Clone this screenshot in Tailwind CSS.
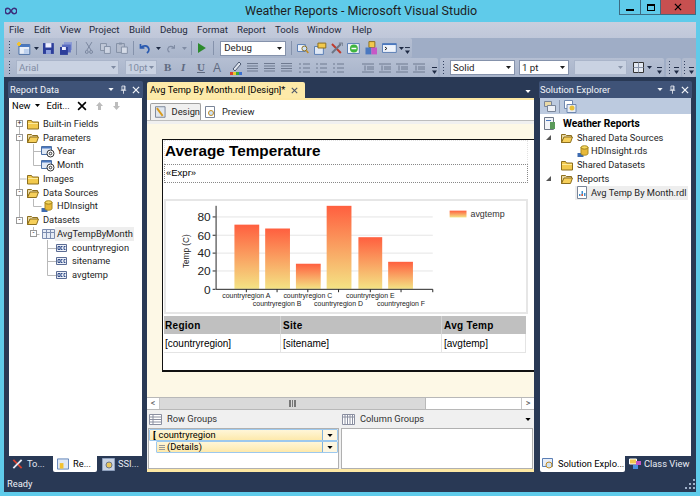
<!DOCTYPE html>
<html lang="en">
<head>
  <meta charset="UTF-8">
  <title>Weather Reports - Microsoft Visual Studio</title>
  <script src="https://cdn.jsdelivr.net/npm/@tailwindcss/browser@4"></script>
</head>
<body class="w-[700px] h-[496px] overflow-hidden flex flex-col bg-[#5fcbea] text-[9.300px] text-[#1e1e1e] font-['Roboto','Liberation_Sans',sans-serif]">

  <!-- icon sheet -->
  <svg class="hidden">
    <symbol id="folder" viewBox="0 0 12 12"><path d="M.5 2.500h4l1 1.500h6v7H.5z" fill="#f2c94c" stroke="#8d6f1e"/><path d="M1 5h10v1H1z" fill="#fdeb9c"/></symbol>
    <symbol id="folder-open" viewBox="0 0 12 12"><path d="M.5 2.500h4l1 1h5v2H3l-2.500 5z" fill="#e9d9a6" stroke="#8d6f1e"/><path d="M.5 10.500 3 5h8.500l-2 5.500z" fill="#f6cf5a" stroke="#8d6f1e"/></symbol>
    <symbol id="param" viewBox="0 0 14 13"><path d="M.5 1.500h10v8H.5z" fill="#dfe8f5" stroke="#4a6fa5"/><path d="M1 2h9v1.500H1z" fill="#4a78c0"/><circle cx="9.500" cy="8.500" r="3.500" fill="#fff" stroke="#333"/><circle cx="9.500" cy="8.500" r="1.300" fill="none" stroke="#333"/></symbol>
    <symbol id="source" viewBox="0 0 12 13"><path d="M.5 8h6v4h-6z" fill="#3e6bb0"/><ellipse cx="7.500" cy="2.500" rx="3.500" ry="1.800" fill="#f6d860" stroke="#a98a20"/><path d="M4 2.500v6c0 2.300 7 2.300 7 0v-6c0 2.300-7 2.300-7 0z" fill="#e8b93a" stroke="#a98a20"/></symbol>
    <symbol id="dataset" viewBox="0 0 13 12"><path d="M.5 1.500h12v9H.5z" fill="#e6ecf6" stroke="#7d8db0"/><path d="M4.500 1.500v9M8.500 1.500v9M.5 4.500h12" stroke="#7d8db0" fill="none"/></symbol>
    <symbol id="field" viewBox="0 0 11 10"><path d="M.5 1.500h10v7H.5z" fill="#eef1f8" stroke="#5b6c94"/><path d="M2 3.500h2v3H2zM5 3.500h1.500M5 6.500h1.500M5 3.500v3M8 3.500h1.500M8 6.500h1.500M8 3.500v3" stroke="#34508c" fill="none"/></symbol>
    <symbol id="close" viewBox="0 0 9 9"><path d="M1 1l7 7M8 1L1 8" stroke="currentColor" stroke-width="1.400" fill="none"/></symbol>
    <symbol id="pin" viewBox="0 0 9 11"><path d="M2.500 1h4v5h-4zM1 6.500h7M4.500 6.500V11M5.500 1v5" stroke="currentColor" fill="none"/></symbol>
    <symbol id="down" viewBox="0 0 7 4"><path d="M0 0h7L3.500 4z" fill="currentColor"/></symbol>
    <symbol id="overflow" viewBox="0 0 7 9"><path d="M1 1.500h5" stroke="#1e2a44"/><path d="M1 4.500h5L3.500 8z" fill="#1e2a44"/></symbol>
    <symbol id="grip" viewBox="0 0 3 16"><path d="M1 1h1v1H1zM1 4h1v1H1zM1 7h1v1H1zM1 10h1v1H1zM1 13h1v1H1z" fill="#33415f"/></symbol>
    <symbol id="align" viewBox="0 0 11 9"><path d="M0 .5h11M0 3h11M0 5.500h11M0 8h11" stroke="#6f7a90" fill="none"/></symbol>
    <symbol id="list" viewBox="0 0 11 10"><path d="M0 1h2M0 5h2M0 9h2M4 1h7M4 5h7M4 9h7" stroke="#6f7a90" fill="none"/></symbol>
    <symbol id="indent" viewBox="0 0 12 10"><path d="M0 1h12M5 4h7M5 6h7M0 9h12M3 2.500v5" stroke="#6f7a90" fill="none"/></symbol>
    <symbol id="report" viewBox="0 0 12 13"><path d="M1.500.5h9v12h-9z" fill="#fff" stroke="#7a8598"/><path d="M3 10V8h1.500v2zM5.500 10V5H7v5zM8 10V7h1.500v3z" fill="#3f8fce"/><path d="M5.500 10V8H7v2z" fill="#e05a3a"/></symbol>
  </svg>

  <!-- title bar -->
  <header class="h-[22px] shrink-0 flex items-start relative">
    <svg class="w-[12px] h-[8px] ml-[5px] mt-[7px] shrink-0" viewBox="0 0 12 8"><path d="M3 1.200a2.800 2.800 0 1 0 0 5.600c2.200 0 3.800-5.600 6-5.600a2.800 2.800 0 1 1 0 5.600C6.800 6.800 5.200 1.200 3 1.200z" fill="none" stroke="#3c2f7c" stroke-width="1.600"/></svg>
    <h1 class="ml-[228px] text-[12.500px] leading-[22px] whitespace-nowrap">Weather Reports - Microsoft Visual Studio</h1>
    <div class="ml-auto mr-[4px] h-[15px] flex border border-t-0 border-[#3c6b82]">
      <div class="w-[21px] flex items-end justify-center pb-[3px] border-r border-[#3c6b82]"><span class="w-[8px] h-[2px] bg-black"></span></div>
      <div class="w-[20px] flex items-center justify-center border-r border-[#3c6b82]"><span class="w-[8px] h-[7px] border border-t-2 border-black"></span></div>
      <div class="w-[34px] flex items-center justify-center bg-[#c75050] text-black"><svg class="w-[8px] h-[8px]"><use href="#close"/></svg></div>
    </div>
  </header>

  <div class="flex-1 mx-[4px] mb-[4px] min-h-0 flex flex-col bg-[#293955]">

    <!-- menu -->
    <nav class="h-[16px] shrink-0 flex items-center bg-gradient-to-b from-[#c9cfde] to-[#bfc7d9] text-[#1f2a3d] text-[9.700px] pt-[1px]">
      <span class="ml-[5px] w-[25px]">File</span>
      <span class="w-[26px]">Edit</span>
      <span class="w-[29px]">View</span>
      <span class="w-[40px]">Project</span>
      <span class="w-[31px]">Build</span>
      <span class="w-[37px]">Debug</span>
      <span class="w-[40px]">Format</span>
      <span class="w-[38px]">Report</span>
      <span class="w-[32px]">Tools</span>
      <span class="w-[45px]">Window</span>
      <span>Help</span>
    </nav>

    <!-- toolbar 1 -->
    <div class="h-[20px] shrink-0 flex bg-[#9fadc6]">
      <div class="w-[408px] flex items-center bg-gradient-to-b from-[#b5bfd3] to-[#a8b4ca] rounded-r-[2px]">
        <svg class="ml-[4px] w-[3px] h-[16px]"><use href="#grip"/></svg>
        <svg class="ml-[5px] w-[15px] h-[14px]" viewBox="0 0 15 14"><path d="M3 3.500h11v10H3z" fill="#e8eef8" stroke="#4a6fa5"/><path d="M3 3.500h11v2.500H3z" fill="#4a78c0"/><path d="M8 8h5v5H8z" fill="#bcd0ee"/><path d="M1 3h4M3 1v4" stroke="#f2c230" stroke-width="2"/></svg>
        <svg class="ml-[3px] w-[5px] h-[3px] text-[#1e2a44]"><use href="#down"/></svg>
        <svg class="ml-[4px] w-[11px] h-[11px]" viewBox="0 0 11 11"><path d="M0 0h11v11H0z" fill="#2c3e9a"/><path d="M2.500 0h6v4.500h-6z" fill="#eef"/><path d="M3 7h5v4H3z" fill="#8fa2dd"/></svg>
        <svg class="ml-[6px] w-[13px] h-[13px]" viewBox="0 0 13 13"><path d="M4 0h9v8H4z" fill="#8b9ad4"/><path d="M2 2.500h9v8H2z" fill="#5a6cc0"/><path d="M0 5h8v8H0z" fill="#2c3e9a"/><path d="M2 5h4v3H2z" fill="#eef"/></svg>
        <span class="ml-[4px] w-[1px] h-[14px] bg-[#8592ab]"></span>
        <svg class="ml-[8px] w-[8px] h-[12px]" viewBox="0 0 8 12"><path d="M1 0l5 8M7 0L2 8" stroke="#7a869e" fill="none"/><circle cx="1.800" cy="10" r="1.500" fill="none" stroke="#7a869e"/><circle cx="6.200" cy="10" r="1.500" fill="none" stroke="#7a869e"/></svg>
        <svg class="ml-[7px] w-[11px] h-[11px]" viewBox="0 0 11 11"><path d="M.5.500h6v7h-6z" fill="#c0c8d8" stroke="#8490a6"/><path d="M4.500 3.500h6v7h-6z" fill="#cdd4e2" stroke="#8490a6"/></svg>
        <svg class="ml-[5px] w-[12px] h-[12px]" viewBox="0 0 12 12"><path d="M.5 1.500h8v9h-8z" fill="#b4bccd" stroke="#8490a6"/><path d="M5.500 5h6v6.500h-6z" fill="#d5dbe7" stroke="#8490a6"/><path d="M3 .5h3v2H3z" fill="#8490a6"/></svg>
        <span class="ml-[5px] w-[1px] h-[14px] bg-[#8592ab]"></span>
        <svg class="ml-[5px] w-[11px] h-[11px]" viewBox="0 0 11 11"><path d="M1.500 1v4h4M2 5c2-3 7-3 8 1 .3 1.500-.5 3-2 4" fill="none" stroke="#2a5ab0" stroke-width="1.700"/></svg>
        <svg class="ml-[6px] w-[5px] h-[3px] text-[#1e2a44]"><use href="#down"/></svg>
        <svg class="ml-[6px] w-[9px] h-[9px]" viewBox="0 0 11 11"><path d="M9.500 1v4h-4M9 5C7 2 2 2 1 6c-.3 1.500.5 3 2 4" fill="none" stroke="#7f8ba3" stroke-width="1.500"/></svg>
        <svg class="ml-[7px] w-[5px] h-[3px] text-[#7f8ba3]"><use href="#down"/></svg>
        <span class="ml-[4px] w-[1px] h-[14px] bg-[#8592ab]"></span>
        <svg class="ml-[6px] w-[8px] h-[10px]" viewBox="0 0 8 10"><path d="M0 0l8 5-8 5z" fill="#2c8a2c"/></svg>
        <span class="ml-[7px] w-[1px] h-[14px] bg-[#8592ab]"></span>
        <div class="ml-[6px] w-[67px] h-[15px] flex items-center justify-between px-[3px] bg-white border border-[#8592ab] leading-none text-[9.700px]">Debug<svg class="w-[5px] h-[3px]"><use href="#down"/></svg></div>
        <span class="ml-[5px] w-[1px] h-[14px] bg-[#8592ab]"></span>
        <svg class="ml-[5px] w-[12px] h-[12px]" viewBox="0 0 12 12"><path d="M.5 2.500h8v7h-8z" fill="#eef3fb" stroke="#5b7fb5"/><circle cx="7.500" cy="6.500" r="2.500" fill="#cfe3f7" stroke="#8d6f1e"/><path d="M9.500 8.500l2 2.500" stroke="#c28a1e" stroke-width="1.500"/></svg>
        <svg class="ml-[5px] w-[13px] h-[13px]" viewBox="0 0 13 13"><path d="M.5 4.500h9v8h-9z" fill="#dfe8f5" stroke="#5b7fb5"/><path d="M4 1h8v5H4z" fill="#f2c94c" stroke="#8d6f1e"/></svg>
        <svg class="ml-[3px] w-[13px] h-[13px]" viewBox="0 0 13 13"><path d="M2 2l9 9" stroke="#c0392b" stroke-width="2"/><path d="M11 2L2 11" stroke="#6d7686" stroke-width="2"/><path d="M9 1h4v3" stroke="#6d7686" fill="none"/></svg>
        <svg class="ml-[4px] w-[13px] h-[13px]" viewBox="0 0 13 13"><path d="M.5 1.500h12v10H.5z" fill="#f2f5fa" stroke="#5b7fb5"/><circle cx="7" cy="6.500" r="4" fill="#3fb53f"/><path d="M4.500 6.500h5" stroke="#fff" stroke-width="1.500"/></svg>
        <svg class="ml-[5px] w-[13px] h-[14px]" viewBox="0 0 13 14"><path d="M4 .5h6v6H4z" fill="#f2c94c" stroke="#8d6f1e"/><path d="M.5 6.500h6v7h-6z" fill="#4a78c0"/><path d="M6.500 6.500h6v7h-6z" fill="#c658c6"/></svg>
        <svg class="ml-[5px] w-[15px] h-[10px]" viewBox="0 0 15 10"><path d="M.5.500h14v9H.5z" fill="#eef3fb" stroke="#5b7fb5"/><path d="M.5.500h14V2H.5z" fill="#4a78c0"/><path d="M3 4l2 1.500L3 7" stroke="#222" fill="none"/></svg>
        <svg class="ml-[2px] w-[5px] h-[3px] text-[#1e2a44]"><use href="#down"/></svg>
        <svg class="ml-auto mr-[1px] w-[7px] h-[9px] mt-[5px]"><use href="#overflow"/></svg>
      </div>
    </div>

    <!-- toolbar 2 -->
    <div class="h-[19px] shrink-0 flex bg-[#9fadc6]">
      <div class="w-[434px] flex items-center bg-gradient-to-b from-[#b5bfd3] to-[#a8b4ca] rounded-r-[2px] text-[#7f8ba3]">
        <svg class="ml-[4px] w-[3px] h-[16px]"><use href="#grip"/></svg>
        <div class="ml-[5px] w-[103px] h-[15px] flex items-center justify-between px-[2px] bg-[#c9d2e2] border border-[#aab5ca] leading-none text-[9.700px]">Arial<svg class="w-[5px] h-[3px]"><use href="#down"/></svg></div>
        <div class="ml-[6px] w-[32px] h-[15px] flex items-center justify-between px-[2px] bg-[#c9d2e2] border border-[#aab5ca] leading-none text-[9.700px]">10pt<svg class="w-[5px] h-[3px]"><use href="#down"/></svg></div>
        <b class="ml-[7px] w-[9px] text-[#5f6a80] text-[11px] font-['Liberation_Serif',serif]">B</b>
        <i class="ml-[8px] w-[8px] text-[#5f6a80] text-[11px] font-bold font-['Liberation_Serif',serif]">I</i>
        <u class="ml-[8px] w-[9px] text-[#5f6a80] text-[11px] font-bold font-['Liberation_Serif',serif]">U</u>
        <span class="ml-[7px] w-[12px] text-[#5f6a80] text-[12px] font-['Liberation_Sans',sans-serif]">A</span>
        <svg class="ml-[5px] w-[12px] h-[14px]" viewBox="0 0 12 14"><path d="M3 8l6-7 2 2-6 7z" fill="#dfe4ee" stroke="#4b5870"/><path d="M0 11h3v3H0z" fill="#d8412f"/><path d="M3 11h3v3H3z" fill="#e8c52f"/><path d="M6 11h3v3H6z" fill="#3aa83a"/><path d="M9 11h3v3H9z" fill="#3a6fd0"/></svg>
        <svg class="ml-[5px] w-[11px] h-[9px]"><use href="#align"/></svg>
        <svg class="ml-[6px] w-[11px] h-[9px]"><use href="#align"/></svg>
        <svg class="ml-[6px] w-[11px] h-[9px]"><use href="#align"/></svg>
        <svg class="ml-[7px] w-[11px] h-[10px]"><use href="#list"/></svg>
        <svg class="ml-[6px] w-[11px] h-[10px]"><use href="#list"/></svg>
        <svg class="ml-[6px] w-[11px] h-[10px]"><use href="#list"/></svg>
        <svg class="ml-[18px] w-[12px] h-[10px]"><use href="#indent"/></svg>
        <svg class="ml-[5px] w-[12px] h-[10px]"><use href="#indent"/></svg>
        <svg class="ml-[5px] w-[12px] h-[10px]"><use href="#indent"/></svg>
        <svg class="ml-[5px] w-[12px] h-[10px]"><use href="#indent"/></svg>
        <svg class="ml-auto mr-[0px] w-[7px] h-[9px] mt-[5px]"><use href="#overflow"/></svg>
      </div>
      <div class="ml-[2px] w-[224px] flex items-center bg-gradient-to-b from-[#b5bfd3] to-[#a8b4ca] rounded-[2px] text-[9.700px]">
        <svg class="ml-[2px] w-[3px] h-[16px]"><use href="#grip"/></svg>
        <div class="ml-[5px] w-[65px] h-[15px] flex items-center justify-between px-[2px] bg-white border border-[#8592ab] leading-none">Solid<svg class="w-[5px] h-[3px] mr-[1px]"><use href="#down"/></svg></div>
        <div class="ml-[4px] w-[50px] h-[15px] flex items-center justify-between px-[2px] bg-white border border-[#8592ab] leading-none">1 pt<svg class="w-[5px] h-[3px] mr-[1px]"><use href="#down"/></svg></div>
        <div class="ml-[5px] w-[53px] h-[15px] flex items-center justify-end px-[3px] bg-[#c9d2e2] border border-[#aab5ca] text-[#8a95aa]"><svg class="w-[5px] h-[3px]"><use href="#down"/></svg></div>
        <svg class="ml-[6px] w-[11px] h-[11px]" viewBox="0 0 11 11"><path d="M.5.500h10v10H.5z" fill="#e4e9f2" stroke="#333"/><path d="M5.500.5v10M.5 5.500h10" stroke="#8a95aa"/></svg>
        <svg class="ml-[3px] w-[5px] h-[3px] text-[#1e2a44]"><use href="#down"/></svg>
        <svg class="ml-auto mr-[1px] w-[7px] h-[9px] mt-[5px]"><use href="#overflow"/></svg>
      </div>
      <div class="ml-[2px] w-[15px] flex items-center justify-center gap-[2px] bg-[#b0bace] rounded-[2px]"><svg class="w-[3px] h-[16px]"><use href="#grip"/></svg><svg class="w-[7px] h-[9px] mt-[5px]"><use href="#overflow"/></svg></div>
      <div class="ml-[1px] w-[14px] flex items-center justify-center gap-[2px] bg-[#b0bace] rounded-[2px]"><svg class="w-[3px] h-[16px]"><use href="#grip"/></svg><svg class="w-[7px] h-[9px] mt-[5px]"><use href="#overflow"/></svg></div>
    </div>

    <!-- docking area -->
    <main class="flex-1 min-h-0 flex px-[4px] pt-[4px] gap-[4px]">

      <!-- report data -->
      <section class="w-[135px] shrink-0 flex flex-col">
        <div class="h-[17px] shrink-0 flex items-center pl-[2px] pr-[3px] rounded-t-[2px] bg-[#3f5378] text-[#f2f4f8]">
          <span>Report Data</span>
          <svg class="ml-auto w-[6px] h-[3px]"><use href="#down"/></svg>
          <svg class="ml-[6px] w-[7px] h-[9px]"><use href="#pin"/></svg>
          <svg class="ml-[5px] w-[8px] h-[8px]"><use href="#close"/></svg>
        </div>
        <div class="h-[358px] shrink-0 bg-white mx-[1px] flex flex-col relative">
          <div class="h-[15px] shrink-0 flex items-center pl-[3px] text-black">
            <span>New</span><svg class="ml-[4px] w-[5px] h-[3px]"><use href="#down"/></svg>
            <span class="ml-[7px]">Edit...</span>
            <svg class="ml-[7px] w-[10px] h-[10px]"><use href="#close"/></svg>
            <svg class="ml-[9px] w-[7px] h-[8px]" viewBox="0 0 7 8"><path d="M3.500 0L7 4H5v4H2V4H0z" fill="#bcbcbc"/></svg>
            <svg class="ml-[10px] w-[7px] h-[8px]" viewBox="0 0 7 8"><path d="M3.500 8L7 4H5V0H2v4H0z" fill="#bcbcbc"/></svg>
          </div>
          <svg class="absolute left-0 top-0 w-[133px] h-[200px]" viewBox="0 0 133 200" fill="none" stroke="#b9b9b9"><path d="M10.500 26v96M10.500 81h7M24.500 46v21.500M24.500 53.500h8M24.500 67.500h8M24.500 101v7.500h8M24.500 129v7.500h6M38.500 142v35.500M38.500 150.500h9M38.500 163.500h9M38.500 177.500h9"/></svg>
          <ul class="relative pt-[4px] whitespace-nowrap [&>li]:h-[13.750px] [&>li]:flex [&>li]:items-center">
            <li class="pl-[7px]"><span class="w-[7px] h-[7px] border border-[#999] bg-white flex items-center justify-center text-[7px] leading-none mr-[4px]">+</span><svg class="w-[12px] h-[12px]"><use href="#folder"/></svg><span class="ml-[4px]">Built-in Fields</span></li>
            <li class="pl-[7px]"><span class="w-[7px] h-[7px] border border-[#999] bg-white flex items-center justify-center text-[7px] leading-none mr-[4px]">-</span><svg class="w-[12px] h-[12px]"><use href="#folder-open"/></svg><span class="ml-[4px]">Parameters</span></li>
            <li class="pl-[32px]"><svg class="w-[14px] h-[13px]"><use href="#param"/></svg><span class="ml-[2px]">Year</span></li>
            <li class="pl-[32px]"><svg class="w-[14px] h-[13px]"><use href="#param"/></svg><span class="ml-[2px]">Month</span></li>
            <li class="pl-[18px]"><svg class="w-[12px] h-[12px]"><use href="#folder"/></svg><span class="ml-[4px]">Images</span></li>
            <li class="pl-[7px]"><span class="w-[7px] h-[7px] border border-[#999] bg-white flex items-center justify-center text-[7px] leading-none mr-[4px]">-</span><svg class="w-[12px] h-[12px]"><use href="#folder-open"/></svg><span class="ml-[4px]">Data Sources</span></li>
            <li class="pl-[32px]"><svg class="w-[12px] h-[13px]"><use href="#source"/></svg><span class="ml-[4px]">HDInsight</span></li>
            <li class="pl-[7px]"><span class="w-[7px] h-[7px] border border-[#999] bg-white flex items-center justify-center text-[7px] leading-none mr-[4px]">-</span><svg class="w-[12px] h-[12px]"><use href="#folder-open"/></svg><span class="ml-[4px]">Datasets</span></li>
            <li class="pl-[21px]"><span class="w-[7px] h-[7px] border border-[#999] bg-white flex items-center justify-center text-[7px] leading-none mr-[5px]">-</span><svg class="w-[13px] h-[12px]"><use href="#dataset"/></svg><span class="pl-[2px] pr-[1px] bg-[#eeeeee]">AvgTempByMonth</span></li>
            <li class="pl-[47px]"><svg class="w-[11px] h-[10px]"><use href="#field"/></svg><span class="ml-[5px]">countryregion</span></li>
            <li class="pl-[47px]"><svg class="w-[11px] h-[10px]"><use href="#field"/></svg><span class="ml-[5px]">sitename</span></li>
            <li class="pl-[47px]"><svg class="w-[11px] h-[10px]"><use href="#field"/></svg><span class="ml-[5px]">avgtemp</span></li>
          </ul>
        </div>
        <div class="flex text-[#e8ecf4] h-[16px] leading-none items-center">
          <div class="ml-[3px] w-[40px] flex items-center gap-[3px]">
            <svg class="w-[13px] h-[12px]" viewBox="0 0 13 13"><path d="M2 2l9 9" stroke="#d8412f" stroke-width="2"/><path d="M11 2L2 11" stroke="#e5e9f1" stroke-width="2"/></svg>To...
          </div>
          <div class="ml-[2px] w-[44px] h-[16px] flex items-center gap-[4px] pl-[4px] bg-white text-black rounded-b-[2px]">
            <svg class="w-[12px] h-[12px]" viewBox="0 0 13 12"><path d="M.5.500h12v11H.5z" fill="#dfe8f5" stroke="#5b7fb5"/><path d="M3 5h4v6H3z" fill="#f2c230"/></svg>Re...
          </div>
          <div class="ml-[5px] flex items-center gap-[3px]">
            <svg class="w-[13px] h-[13px]" viewBox="0 0 13 13"><path d="M.5.500h12v12H.5z" fill="#c8d3e4" stroke="#8ea0bd"/><circle cx="7" cy="7" r="3" fill="#e9c65c" stroke="#6d7686"/></svg>SSI...
          </div>
        </div>
      </section>

      <!-- document well -->
      <section class="w-[387px] shrink-0 flex flex-col relative">
        <div class="h-[16px] mt-[1px] shrink-0 flex">
          <div class="w-[158px] flex items-center pl-[3px] rounded-t-[2px] bg-[#fdeaa9] text-black whitespace-nowrap">
            Avg Temp By Month.rdl [Design]*
            <svg class="ml-auto mr-[7px] w-[7px] h-[7px] text-[#4d5568]"><use href="#close"/></svg>
          </div>
          <svg class="ml-auto mr-[3px] mt-[8px] w-[6px] h-[3px] text-white"><use href="#down"/></svg>
        </div>
        <div class="h-[374px] shrink-0 flex flex-col border-t-2 border-[#fde8a3] bg-white">
          <div class="h-[21px] shrink-0 flex items-end pl-[3px] border-b border-[#bdbdbd]">
            <div class="w-[51px] h-[17px] flex items-center pl-[4px] gap-[6px] bg-[#f0f0f0] border border-b-0 border-[#a0a0a0] rounded-t-[2px]">
              <svg class="w-[11px] h-[12px]" viewBox="0 0 11 12"><path d="M.5.500h10v11H.5z" fill="#dfe6ef" stroke="#7a8598"/><path d="M2 2l6 8" stroke="#d99a1e" stroke-width="2"/></svg>Design
            </div>
            <div class="ml-[4px] h-[17px] flex items-center gap-[6px]">
              <svg class="w-[11px] h-[12px]" viewBox="0 0 11 12"><path d="M.5.500h9v11h-9z" fill="#fff" stroke="#7a8598"/><circle cx="6" cy="7" r="2.500" fill="#cfe3f7" stroke="#c28a1e"/></svg>Preview
            </div>
          </div>
          <div class="h-[3px] shrink-0 bg-[#f0f0f0]"></div>

          <!-- design surface -->
          <div class="h-[273px] shrink-0 bg-[#fdf8e6] pt-[15px] pl-[15px] overflow-hidden font-['Liberation_Sans',sans-serif]">
            <div class="h-[233px] bg-white border-l-[1.500px] border-t border-b-2 border-[#111] pl-[1px] pr-[6px] text-black">
              <div class="h-[24px] flex items-center pb-[2px] text-[15.300px] font-bold border border-[#e2e2e2] border-b-0 border-dotted">Average Temperature</div>
              <div class="h-[19px] flex items-center pl-[1px] text-[9.500px] border border-dotted border-[#888]">«Expr»</div>
              <!-- chart -->
              <div class="mt-[16px] h-[115px] border-2 border-[#e6e6e6] relative">
                <svg class="w-full h-full" viewBox="164 198 363 115" preserveAspectRatio="none">
                  <defs><linearGradient id="bar" x1="0" y1="0" x2="0" y2="1"><stop offset="0" stop-color="#ff5f3f"/><stop offset="1" stop-color="#f4e384"/></linearGradient></defs>
                  <path d="M214 214.500h219M214 233.500h219M214 252h219M214 270.500h219" stroke="#e4e4e4" fill="none"/>
                  <rect x="233" y="222.500" width="25" height="66.500" fill="url(#bar)"/>
                  <rect x="264" y="226.500" width="25" height="62.500" fill="url(#bar)"/>
                  <rect x="295" y="263" width="25" height="26" fill="url(#bar)"/>
                  <rect x="326" y="203" width="25" height="86" fill="url(#bar)"/>
                  <rect x="358" y="235.500" width="24" height="53.500" fill="url(#bar)"/>
                  <rect x="388" y="261" width="25" height="28" fill="url(#bar)"/>
                  <path d="M214.500 203v86.500H433M211 214.500h3M211 233.500h3M211 252h3M211 270.500h3M211 289.500h3M245 289.500v3M276 289.500v3M307 289.500v3M338 289.500v3M370 289.500v3M401 289.500v3M433 289.500v3" stroke="#222" fill="none"/>
                  <g font-size="12" fill="#222" text-anchor="end">
                    <text x="209" y="219">80</text><text x="209" y="238">60</text><text x="209" y="256.500">40</text><text x="209" y="275">20</text><text x="209" y="294">0</text>
                  </g>
                  <text transform="translate(187 250) rotate(-90)" font-size="8.500" fill="#222" text-anchor="middle">Temp (C)</text>
                  <g font-size="7" fill="#222" text-anchor="middle">
                    <text x="245" y="298">countryregion A</text><text x="276" y="307">countryregion B</text><text x="307" y="298">countryregion C</text><text x="338" y="307">countryregion D</text><text x="370" y="298">countryregion E</text><text x="401" y="307">countryregion F</text>
                  </g>
                  <rect x="450" y="208" width="17" height="7" fill="url(#bar)"/>
                  <text x="471" y="215" font-size="9" fill="#333">avgtemp</text>
                </svg>
              </div>
              <!-- tablix -->
              <div class="mt-[2px] w-[362px] grid grid-cols-[117px_161px_84px] text-[10px] border-b border-r border-[#e4e4e4]">
                <div class="h-[18px] flex items-center pl-[1px] font-bold bg-[#c0c0c0] border-r border-[#d4d4d4] tracking-[0.3px]">Region</div>
                <div class="h-[18px] flex items-center pl-[2px] font-bold bg-[#c0c0c0] border-r border-[#d4d4d4] tracking-[0.3px]">Site</div>
                <div class="h-[18px] flex items-center pl-[2px] font-bold bg-[#c0c0c0] tracking-[0.3px]">Avg Temp</div>
                <div class="h-[18px] flex items-center pl-[1px] border-r border-[#e4e4e4]">[countryregion]</div>
                <div class="h-[18px] flex items-center pl-[2px] border-r border-[#e4e4e4]">[sitename]</div>
                <div class="h-[18px] flex items-center pl-[2px]">[avgtemp]</div>
              </div>
            </div>
          </div>

          <!-- scrollbar -->
          <div class="h-[13px] shrink-0 flex bg-white border-y border-[#b8b8b8]">
            <div class="w-[13px] flex items-center justify-center text-[#555] text-[9px] leading-none border-r border-[#c8c8c8]">&lt;</div>
            <div class="w-[266px] flex items-center justify-center bg-[#d9d9d9] border-r border-[#b8b8b8] text-[#666] text-[8px] leading-none">
              <span class="w-[7px] h-[7px] border-x-2 border-[#777] flex justify-center"><span class="w-[1px] bg-[#777]"></span></span>
            </div>
            <div class="flex-1"></div>
            <div class="w-[13px] flex items-center justify-center text-[#555] text-[9px] leading-none border-l border-[#c8c8c8]">&gt;</div>
          </div>

          <!-- grouping -->
          <div class="flex-1 grid grid-cols-[193px_194px] bg-[#f0f0f0] text-[#333]">
            <div class="flex flex-col">
              <div class="h-[18px] flex items-center pl-[2px]">
                <svg class="w-[13px] h-[11px]" viewBox="0 0 13 11"><path d="M.5.500h12v10H.5z" fill="#fff" stroke="#8a8fa0"/><path d="M.5 3h12M.5 5.500h12M.5 8h12M4 .5v10" stroke="#8a8fa0"/></svg>
                <span class="ml-[5px]">Row Groups</span>
              </div>
              <div class="h-[41px] mx-[1px] mr-[1px] bg-white border border-[#b0b0b0] text-black">
                <div class="h-[12px] flex items-center bg-gradient-to-b from-[#fff6d8] to-[#fde9ab] border border-[#9cc8ee] rounded-[1px]">
                  <span class="ml-[3px] mr-[3px] font-bold">[</span>countryregion
                  <span class="ml-auto w-[15px] h-full flex items-center justify-center bg-[#fdf6e0] border-l border-[#7fb2de]"><svg class="w-[6px] h-[3px] text-black"><use href="#down"/></svg></span>
                </div>
                <div class="h-[12px] ml-[7px] flex items-center bg-gradient-to-b from-[#fff6d8] to-[#fde9ab] border border-[#9cc8ee] rounded-[1px]">
                  <span class="ml-[2px] mr-[2px] w-[6px] h-[5px] border-y border-[#999] relative"><span class="absolute left-0 right-0 top-[1px] h-[1px] bg-[#999]"></span></span>(Details)
                  <span class="ml-auto w-[15px] h-full flex items-center justify-center bg-[#fdf6e0] border-l border-[#7fb2de]"><svg class="w-[6px] h-[3px] text-black"><use href="#down"/></svg></span>
                </div>
              </div>
            </div>
            <div class="flex flex-col">
              <div class="h-[18px] flex items-center pl-[2px]">
                <svg class="w-[13px] h-[11px]" viewBox="0 0 13 11"><path d="M.5.500h12v10H.5z" fill="#fff" stroke="#8a8fa0"/><path d="M3 .5v10M5.500.5v10M8 .5v10M10.500.5v10M.5 3h12" stroke="#8a8fa0"/></svg>
                <span class="ml-[5px]">Column Groups</span>
                <svg class="ml-auto mr-[3px] w-[6px] h-[3px] text-black"><use href="#down"/></svg>
              </div>
              <div class="h-[41px] mx-[1px] bg-white border border-[#b0b0b0]"></div>
            </div>
          </div>
          <div class="h-[3px] shrink-0 bg-[#fde8a3]"></div>
        </div>
      </section>

      <!-- solution explorer -->
      <section class="ml-[1px] w-[153px] shrink-0 flex flex-col">
        <div class="h-[17px] shrink-0 flex items-center pl-[1px] pr-[3px] rounded-t-[2px] bg-[#3f5378] text-[#f2f4f8]">
          <span>Solution Explorer</span>
          <svg class="ml-auto w-[6px] h-[3px]"><use href="#down"/></svg>
          <svg class="ml-[6px] w-[7px] h-[9px]"><use href="#pin"/></svg>
          <svg class="ml-[5px] w-[8px] h-[8px]"><use href="#close"/></svg>
        </div>
        <div class="h-[358px] shrink-0 flex flex-col mx-[1px] bg-white">
          <div class="h-[16px] shrink-0 flex items-center pl-[4px] bg-[#bccadf]">
            <svg class="w-[12px] h-[12px]" viewBox="0 0 12 12"><path d="M.5 1.500h7v5h-7z" fill="#e9d9a6" stroke="#7a8598"/><path d="M3.500 5.500h8v6h-8z" fill="#eef1f7" stroke="#7a8598"/></svg>
            <span class="ml-[3px] w-[1px] h-[13px] bg-[#8e9bb3]"></span>
            <svg class="ml-[4px] w-[13px] h-[13px]" viewBox="0 0 13 13"><path d="M.5.500h8v8h-8z" fill="#fff" stroke="#6f88b0"/><path d="M3 4.500h9v8H3z" fill="#e8edf6" stroke="#6f88b0"/><circle cx="8" cy="8" r="2.500" fill="#e8c03a"/></svg>
          </div>
          <ul class="pt-[3px] whitespace-nowrap [&>li]:h-[13.750px] [&>li]:flex [&>li]:items-center">
            <li class="pl-[3px] font-bold text-black text-[10.200px]"><svg class="w-[13px] h-[13px]" viewBox="0 0 13 13"><path d="M1.500.5h9v12h-9z" fill="#f2f4f8" stroke="#6d7686"/><path d="M7 5h5v7H7z" fill="#5a9a5a"/><path d="M3 3h5v1H3z" fill="#4a78c0"/></svg><span class="ml-[7px]">Weather Reports</span></li>
            <li class="pl-[6px]"><svg class="w-[5px] h-[5px] mr-[10px]" viewBox="0 0 5 5"><path d="M5 0v5H0z" fill="#555"/></svg><svg class="w-[12px] h-[12px]"><use href="#folder-open"/></svg><span class="ml-[4px]">Shared Data Sources</span></li>
            <li class="pl-[37px]"><svg class="w-[12px] h-[13px]"><use href="#source"/></svg><span class="ml-[2px]">HDInsight.rds</span></li>
            <li class="pl-[21px]"><svg class="w-[12px] h-[12px]"><use href="#folder"/></svg><span class="ml-[4px]">Shared Datasets</span></li>
            <li class="pl-[6px]"><svg class="w-[5px] h-[5px] mr-[10px]" viewBox="0 0 5 5"><path d="M5 0v5H0z" fill="#555"/></svg><svg class="w-[12px] h-[12px]"><use href="#folder-open"/></svg><span class="ml-[4px]">Reports</span></li>
            <li class="pl-[35px]"><span class="flex items-center bg-[#eeeeee] pl-[1px] pr-[1px] h-[14px]"><svg class="w-[12px] h-[13px]"><use href="#report"/></svg><span class="ml-[3px]">Avg Temp By Month.rdl</span></span></li>
          </ul>
        </div>
        <div class="flex text-[#e8ecf4] h-[16px] leading-none items-center">
          <div class="ml-[1px] w-[85px] h-[16px] flex items-center gap-[3px] pl-[2px] bg-white text-black rounded-b-[2px] whitespace-nowrap">
            <svg class="w-[13px] h-[12px]" viewBox="0 0 13 12"><path d="M.5.500h10v8H.5z" fill="#e8eef8" stroke="#5b7fb5"/><circle cx="7" cy="7" r="3" fill="#cfe3f7" stroke="#c28a1e"/></svg>Solution Explo...
          </div>
          <div class="ml-[4px] flex items-center gap-[2px] whitespace-nowrap">
            <svg class="w-[13px] h-[12px]" viewBox="0 0 13 12"><path d="M.5 1h7v5h-7z" fill="#f2c94c" stroke="#fff"/><path d="M7 3h5v4H7z" fill="#c658c6"/><path d="M4 7h5v4H4z" fill="#4a8fe0"/></svg>Class View
          </div>
        </div>
      </section>
    </main>

    <!-- status -->
    <footer class="h-[16px] shrink-0 flex items-center pl-[3px] text-[#eef1f6] relative">
      Ready
      <svg class="ml-auto mr-[1px] w-[10px] h-[10px]" viewBox="0 0 10 10"><path d="M8 8h2v2H8zM4 8h2v2H4zM0 8h2v2H0zM8 4h2v2H8zM4 4h2v2H4zM8 0h2v2H8z" fill="#9fb0c8"/></svg>
    </footer>
  </div>
</body>
</html>
